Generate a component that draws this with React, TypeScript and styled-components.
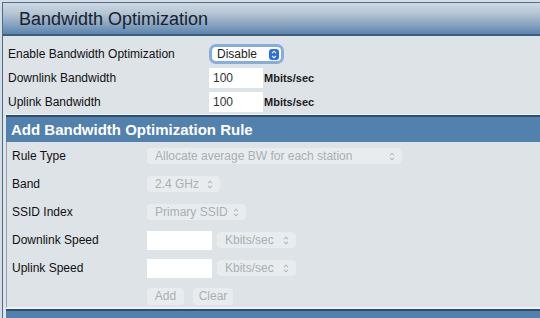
import React from "react";
import styled, { createGlobalStyle } from "styled-components";

const GlobalStyle = createGlobalStyle`
  html, body {
    margin: 0;
    padding: 0;
    background: #d6dee5;
    font-family: "Liberation Sans", Arial, Helvetica, sans-serif;
  }
`;

const Page = styled.div`
  width: 540px;
  height: 318px;
  overflow: hidden;
  padding: 2px 0 0 2px;
  box-sizing: border-box;
  background: #d6dee5;
`;

const Panel = styled.div`
  border-left: 1px solid #4d6a86;
  background: #dde3e7;
  min-height: 100%;
`;

const TitleBar = styled.div`
  height: 31px;
  border-top: 1px solid #506f8e;
  border-bottom: 2px solid #3e5e7e;
  background: linear-gradient(#cfd9e2 0%, #b3c4d3 35%, #87a3bf 70%, #5c85ad 100%);
  padding-left: 16px;
  font-size: 18px;
  line-height: 32px;
  color: #17222e;
`;

const Form = styled.div`
  padding: 6px 0 1px 5px;
`;

const Row = styled.div<{ $labelWidth: number; $height: number }>`
  display: grid;
  grid-template-columns: ${p => p.$labelWidth}px auto 1fr;
  align-items: center;
  column-gap: ${p => (p.$labelWidth > 150 ? 1 : 5)}px;
  height: ${p => p.$height}px;
`;

const Label = styled.span`
  font-size: 12px;
  color: #111;
`;

const Controls = styled.div<{ $gap?: number; $shift?: number }>`
  display: flex;
  align-items: center;
  gap: ${p => p.$gap ?? 5}px;
  padding-top: ${p => p.$shift ?? 0}px;
`;

const FocusSelect = styled.div`
  width: 62px;
  height: 14px;
  border: 3px solid #86ade2;
  border-radius: 7px;
  background: #fff;
  display: flex;
  align-items: center;
  justify-content: space-between;
  padding: 0 2px 0 5px;
  font-size: 12px;
  color: #222;
`;

const BlueArrows = styled.span`
  width: 10px;
  height: 11px;
  border-radius: 3px;
  background: #2e6fdf;
  display: flex;
  align-items: center;
  justify-content: center;
`;

const TextBox = styled.div<{ $width: number; $height: number }>`
  width: ${p => p.$width}px;
  height: ${p => p.$height}px;
  background: #fff;
  box-sizing: border-box;
  padding-left: 4px;
  display: flex;
  align-items: center;
  font-size: 12px;
  color: #333;
`;

const Unit = styled.span`
  font-size: 11px;
  font-weight: bold;
  color: #1c1c1c;
`;

const Section = styled.div`
  margin-left: 3px;
`;

const SectionHeader = styled.div<{ $height: number }>`
  height: ${p => p.$height}px;
  border-top: 2px solid #2f4e6d;
  box-shadow: 0 -1px 0 #eef2f5;
  background: #5281ad;
  color: #fff;
  font-size: 15px;
  font-weight: bold;
  line-height: ${p => p.$height}px;
  padding-left: 5px;
`;

const SectionBody = styled.div`
  border-left: 1px solid #97a4af;
  border-bottom: 1px solid #eef2f4;
  padding-left: 5px;
  margin-bottom: 1px;
`;

const DimSelect = styled.div<{ $width: number }>`
  width: ${p => p.$width}px;
  height: 16px;
  box-sizing: border-box;
  border-radius: 4px;
  background: #e8ecee;
  display: flex;
  align-items: center;
  justify-content: space-between;
  padding: 0 7px 0 8px;
  font-size: 12px;
  color: #a9afb3;
`;

const DimButton = styled.div<{ $width: number }>`
  width: ${p => p.$width}px;
  height: 17px;
  border-radius: 4px;
  background: #e8ecee;
  display: flex;
  align-items: center;
  justify-content: center;
  font-size: 12px;
  color: #a9afb3;
`;

const UpDown = ({ color }: { color: string }) => (
  <svg width="6" height="9" viewBox="0 0 6 9" fill="none" stroke={color} strokeWidth="1.1">
    <path d="M1 3.2 L3 1.2 L5 3.2" />
    <path d="M1 5.8 L3 7.8 L5 5.8" />
  </svg>
);

const Select = ({ width, value }: { width: number; value: string }) => (
  <DimSelect $width={width}>
    <span>{value}</span>
    <UpDown color="#b2b8bc" />
  </DimSelect>
);

export default function App() {
  return (
    <>
      <GlobalStyle />
      <Page>
        <Panel>
          <TitleBar>Bandwidth Optimization</TitleBar>

          <Form>
            <Row $labelWidth={200} $height={24}>
              <Label>Enable Bandwidth Optimization</Label>
              <FocusSelect>
                <span>Disable</span>
                <BlueArrows>
                  <UpDown color="#fff" />
                </BlueArrows>
              </FocusSelect>
            </Row>
            <Row $labelWidth={200} $height={24}>
              <Label>Downlink Bandwidth</Label>
              <TextBox $width={54} $height={20}>100</TextBox>
              <Unit>Mbits/sec</Unit>
            </Row>
            <Row $labelWidth={200} $height={24}>
              <Label>Uplink Bandwidth</Label>
              <TextBox $width={54} $height={20}>100</TextBox>
              <Unit>Mbits/sec</Unit>
            </Row>
          </Form>

          <Section>
            <SectionHeader $height={25}>Add Bandwidth Optimization Rule</SectionHeader>
            <SectionBody>
              <Row $labelWidth={130} $height={28}>
                <Label>Rule Type</Label>
                <Select width={255} value="Allocate average BW for each station" />
              </Row>
              <Row $labelWidth={130} $height={28}>
                <Label>Band</Label>
                <Select width={73} value="2.4 GHz" />
              </Row>
              <Row $labelWidth={130} $height={28}>
                <Label>SSID Index</Label>
                <Select width={99} value="Primary SSID" />
              </Row>
              <Row $labelWidth={130} $height={28}>
                <Label>Downlink Speed</Label>
                <Controls>
                  <TextBox $width={65} $height={19} />
                  <Select width={79} value="Kbits/sec" />
                </Controls>
              </Row>
              <Row $labelWidth={130} $height={28}>
                <Label>Uplink Speed</Label>
                <Controls>
                  <TextBox $width={65} $height={19} />
                  <Select width={79} value="Kbits/sec" />
                </Controls>
              </Row>
              <Row $labelWidth={130} $height={25}>
                <span />
                <Controls $gap={9} $shift={3}>
                  <DimButton $width={37}>Add</DimButton>
                  <DimButton $width={40}>Clear</DimButton>
                </Controls>
              </Row>
            </SectionBody>
            <SectionHeader $height={25} />
          </Section>
        </Panel>
      </Page>
    </>
  );
}
